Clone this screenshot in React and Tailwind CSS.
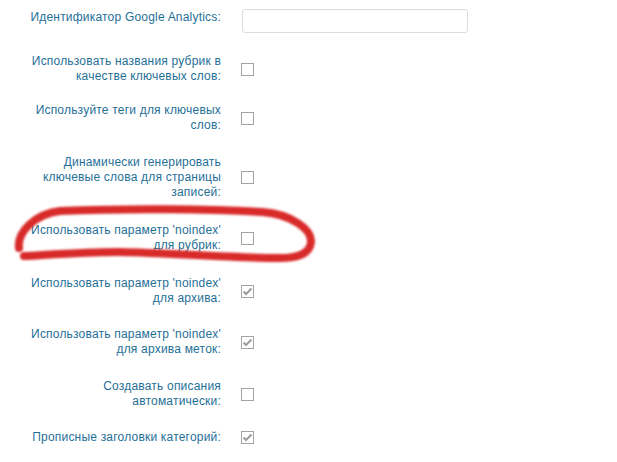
const rows = [
  { lines: ['Использовать названия рубрик в', 'качестве ключевых слов:'], checked: false, mt: 'mt-[21px]' },
  { lines: ['Используйте теги для ключевых', 'слов:'], checked: false, mt: 'mt-[19px]' },
  { lines: ['Динамически генерировать', 'ключевые слова для страницы', 'записей:'], checked: false, mt: 'mt-[22px]' },
  { lines: ["Использовать параметр 'noindex'", 'для рубрик:'], checked: false, mt: 'mt-[23px]' },
  { lines: ["Использовать параметр 'noindex'", 'для архива:'], checked: true, mt: 'mt-[23px]' },
  { lines: ["Использовать параметр 'noindex'", 'для архива меток:'], checked: true, mt: 'mt-[21px]' },
  { lines: ['Создавать описания', 'автоматически:'], checked: false, mt: 'mt-[22px]' },
  { lines: ['Прописные заголовки категорий:'], checked: true, mt: 'mt-[21px]' },
]

function Checkbox({ checked }) {
  return (
    <div className="w-[13px] h-[13px] border border-[#a3a3a3] bg-white flex items-center justify-center">
      {checked && (
        <svg width="11" height="11" viewBox="0 0 11 11">
          <path d="M1.5 5.5 L4 8 L9.5 2.5" fill="none" stroke="#9c9c9c" strokeWidth="2" />
        </svg>
      )}
    </div>
  )
}

export default function App() {
  return (
    <div
      className="relative w-[617px] h-[462px] bg-white overflow-hidden text-[12px] leading-[15px] tracking-[0.2px] text-[#1f7097]"
      style={{ fontFamily: '"Liberation Sans", Arial, sans-serif' }}
    >
      <div className="flex flex-col pt-[9px]">
        <div className="flex items-start">
          <div className="w-[221px] text-right pt-[1px] whitespace-nowrap">Идентификатор Google Analytics:</div>
          <div className="ml-[21px] w-[226px] h-[24px] border border-[#dcdcdc] rounded-[3px] bg-white" />
        </div>
        {rows.map((r, i) => (
          <div key={i} className={`flex items-center ${r.mt}`}>
            <div className="w-[221px] text-right whitespace-nowrap">
              {r.lines.map((l, j) => (
                <div key={j}>{l}</div>
              ))}
            </div>
            <div className="ml-[20px]">
              <Checkbox checked={r.checked} />
            </div>
          </div>
        ))}
      </div>

      <svg className="absolute inset-0 pointer-events-none" width="617" height="462">
        <defs>
          <filter id="soft" x="-10%" y="-50%" width="120%" height="200%">
            <feGaussianBlur stdDeviation="0.9" />
          </filter>
        </defs>
        <path
          d="M19 248 C17 232, 35 214, 60 211 C130 208, 210 209, 262 212 C292 214, 312 230, 311 242 C310 254, 298 258, 280 258 C230 258, 170 253, 120 252 C80 252, 45 255, 24 256"
          fill="none"
          stroke="#d92a2a"
          strokeWidth="8"
          strokeLinecap="round"
          strokeLinejoin="round"
          filter="url(#soft)"
        />
      </svg>
    </div>
  )
}
